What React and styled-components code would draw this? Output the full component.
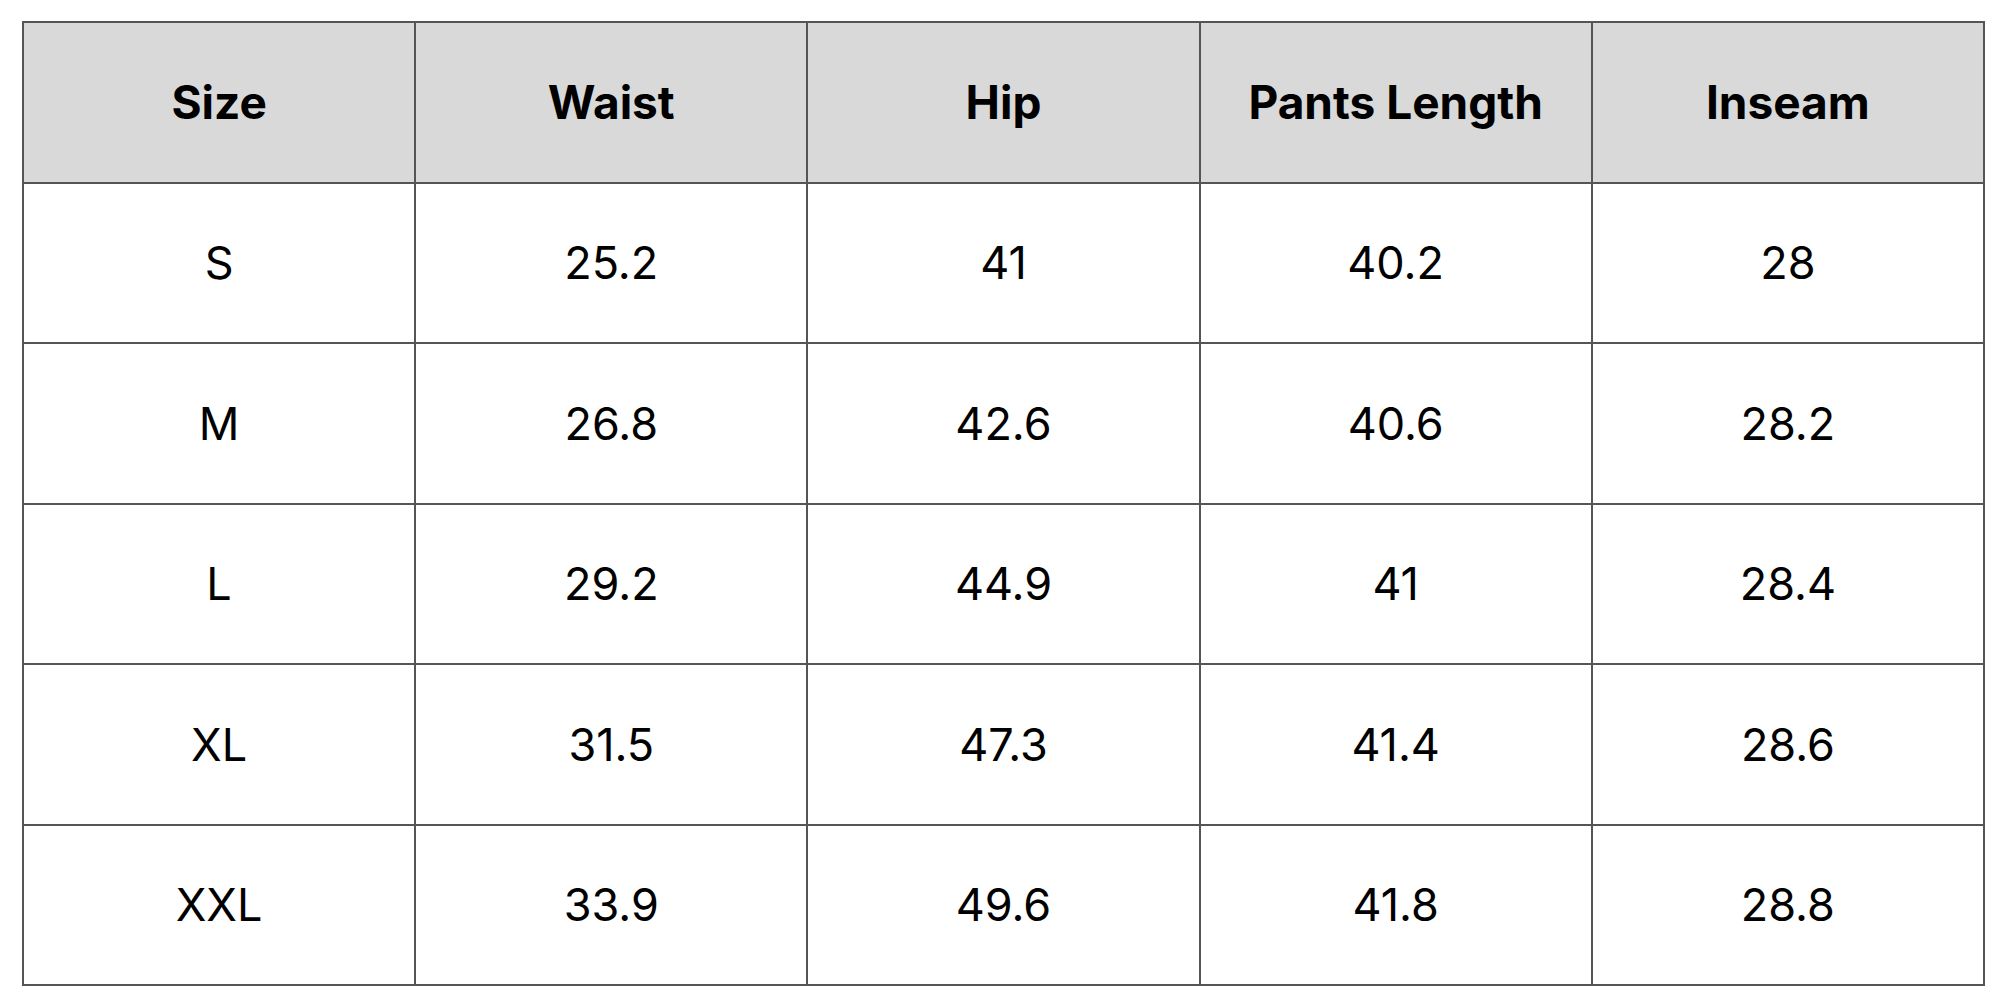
import styled, { createGlobalStyle } from "styled-components";

const GlobalStyle = createGlobalStyle`
  html, body {
    margin: 0;
    padding: 0;
    background: #ffffff;
  }
`;

const Page = styled.main`
  padding: 21px 0 0 22px;
  font-family: Inter, "Open Sans", "Liberation Sans", sans-serif;
  color: #000;
`;

const SizeTable = styled.table`
  width: 1963px;
  border-collapse: collapse;
  table-layout: fixed;
  border: 2px solid #3a3a3a;
`;

const HeadCell = styled.th`
  height: 158.5px;
  background: #d9d9d9;
  border: 2px solid #555555;
  font-size: 46px;
  font-weight: 700;
  text-align: center;
  vertical-align: middle;
  padding: 0;
`;

const Cell = styled.td`
  height: 158.5px;
  border: 2px solid #555555;
  font-size: 45px;
  font-weight: 400;
  text-align: center;
  vertical-align: middle;
  padding: 0;
`;

const columns = ["Size", "Waist", "Hip", "Pants Length", "Inseam"];

const rows = [
  ["S", "25.2", "41", "40.2", "28"],
  ["M", "26.8", "42.6", "40.6", "28.2"],
  ["L", "29.2", "44.9", "41", "28.4"],
  ["XL", "31.5", "47.3", "41.4", "28.6"],
  ["XXL", "33.9", "49.6", "41.8", "28.8"],
];

const App = () => {
  return (
    <Page>
      <GlobalStyle />
      <SizeTable>
        <thead>
          <tr>
            {columns.map((c) => (
              <HeadCell key={c}>{c}</HeadCell>
            ))}
          </tr>
        </thead>
        <tbody>
          {rows.map((r) => (
            <tr key={r[0]}>
              {r.map((v, i) => (
                <Cell key={i}>{v}</Cell>
              ))}
            </tr>
          ))}
        </tbody>
      </SizeTable>
    </Page>
  );
};

export default App;
